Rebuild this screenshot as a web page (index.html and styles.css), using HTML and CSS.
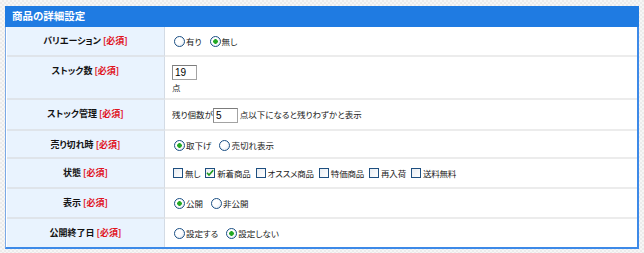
FILE: index.html
```html
<!DOCTYPE html>
<html lang="ja">
<head>
<meta charset="utf-8">
<title>商品の詳細設定</title>
<link rel="stylesheet" href="styles.css">
</head>
<body>
<div class="panel">
  <div class="panel-head">商品の詳細設定</div>
  <div class="detail">
    <div class="label">バリエーション <span class="req">[必須]</span></div>
    <div class="value">
      <label class="opt"><span class="radio"></span>有り</label>
      <label class="opt"><span class="radio on"></span>無し</label>
    </div>

    <div class="label">ストック数 <span class="req">[必須]</span></div>
    <div class="value stack">
      <span class="field block">19</span>
      <div class="unit">点</div>
    </div>

    <div class="label">ストック管理 <span class="req">[必須]</span></div>
    <div class="value line">残り個数が<span class="field">5</span> 点以下になると残りわずかと表示</div>

    <div class="label">売り切れ時 <span class="req">[必須]</span></div>
    <div class="value">
      <label class="opt"><span class="radio on"></span>取下げ</label>
      <label class="opt"><span class="radio"></span>売切れ表示</label>
    </div>

    <div class="label">状態 <span class="req">[必須]</span></div>
    <div class="value checks">
      <label class="opt"><span class="box"></span>無し</label>
      <label class="opt"><span class="box"><svg viewBox="0 0 10 10" width="10" height="10"><path d="M2 4.8 L4 7 L8.2 2.2" fill="none" stroke="#1c9a1c" stroke-width="1.6"/></svg></span>新着商品</label>
      <label class="opt"><span class="box"></span>オススメ商品</label>
      <label class="opt"><span class="box"></span>特価商品</label>
      <label class="opt"><span class="box"></span>再入荷</label>
      <label class="opt"><span class="box"></span>送料無料</label>
    </div>

    <div class="label">表示 <span class="req">[必須]</span></div>
    <div class="value">
      <label class="opt"><span class="radio on"></span>公開</label>
      <label class="opt"><span class="radio"></span>非公開</label>
    </div>

    <div class="label last">公開終了日 <span class="req">[必須]</span></div>
    <div class="value last">
      <label class="opt"><span class="radio"></span>設定する</label>
      <label class="opt"><span class="radio on"></span>設定しない</label>
    </div>
  </div>
</div>
</body>
</html>
```
FILE: styles.css
```css
html, body {
  margin: 0;
  padding: 0;
}
body {
  background-color: #f1f1f1;
  background-image: repeating-conic-gradient(#ebebeb 0 25%, #f6f6f6 0 50%);
  background-size: 4px 4px;
  font-family: "Noto Sans CJK JP", "DejaVu Sans", sans-serif;
  color: #222;
  padding: 6px 0 0 5px;
  height: 253px;
  box-sizing: border-box;
}
.panel {
  width: 634px;
}
.panel-head {
  height: 21px;
  line-height: 20px;
  background: #1f7be2;
  color: #fff;
  font-weight: bold;
  font-size: 10.5px;
  padding-left: 7px;
  box-sizing: border-box;
  font-feature-settings: "palt";
}
.detail {
  display: grid;
  grid-template-columns: 158px 1fr;
  grid-template-rows: 30px 43px 31px 28px 30px 30px 28px;
  background: #fff;
  border-left: 1px solid #7aa9e6;
  border-right: 2px solid #3d8ae8;
  border-bottom: 2px solid #3d8ae8;
  padding-left: 1px;
}
.label {
  box-sizing: border-box;
  background: #e9f3fe;
  border-right: 1px solid #d3dbe5;
  border-bottom: 2px solid #dfe4ea;
  font-size: 9px;
  font-weight: bold;
  text-align: center;
  padding-top: 7px;
  line-height: 14px;
  font-feature-settings: "palt";
  color: #111;
}
.value {
  box-sizing: border-box;
  border-bottom: 2px solid #ececec;
  padding: 7px 7px 0;
  font-size: 8.5px;
  line-height: 14px;
  font-feature-settings: "palt";
  color: #222;
  white-space: nowrap;
  display: flex;
  align-items: flex-start;
  gap: 6px;
}
.value.checks {
  gap: 4px;
  letter-spacing: -0.2px;
}
.value.line {
  display: block;
  line-height: 15px;
}
.value.stack {
  flex-direction: column;
  gap: 0;
}
.label.last, .value.last {
  border-bottom: none;
}
.req {
  color: #e0141e;
  font-size: 9px;
  font-weight: bold;
}
.opt {
  display: inline-flex;
  align-items: center;
  gap: 1px;
  height: 14px;
}
.radio {
  display: inline-block;
  width: 11px;
  height: 11px;
  box-sizing: border-box;
  border-radius: 50%;
  border: 1px solid #1b4f84;
  background: radial-gradient(circle at 35% 35%, #ffffff 0 40%, #dde4ed 100%);
  margin-left: 2px;
}
.radio.on {
  background:
    radial-gradient(circle, #23a823 0 2px, transparent 2.6px),
    radial-gradient(circle at 35% 35%, #ffffff 0 40%, #dde4ed 100%);
}
.box {
  display: inline-block;
  width: 10px;
  height: 10px;
  box-sizing: border-box;
  border: 1px solid #1e4f80;
  background: linear-gradient(135deg, #e9edf2, #ffffff);
  margin-left: 1px;
  margin-right: 1px;
  position: relative;
}
.box svg {
  position: absolute;
  left: -1px;
  top: -1px;
}
.field {
  display: inline-block;
  width: 25px;
  height: 15px;
  box-sizing: border-box;
  border: 1px solid #a3a3a3;
  border-top-color: #7c7c7c;
  border-left-color: #8a8a8a;
  background: #fff;
  font-family: "Liberation Sans", Arial, sans-serif;
  font-size: 10px;
  line-height: 13px;
  padding-left: 2px;
  color: #000;
  vertical-align: middle;
}
.field.block {
  display: block;
  margin-top: 1px;
}
.unit {
  line-height: 12px;
  margin-top: 1px;
}
```
